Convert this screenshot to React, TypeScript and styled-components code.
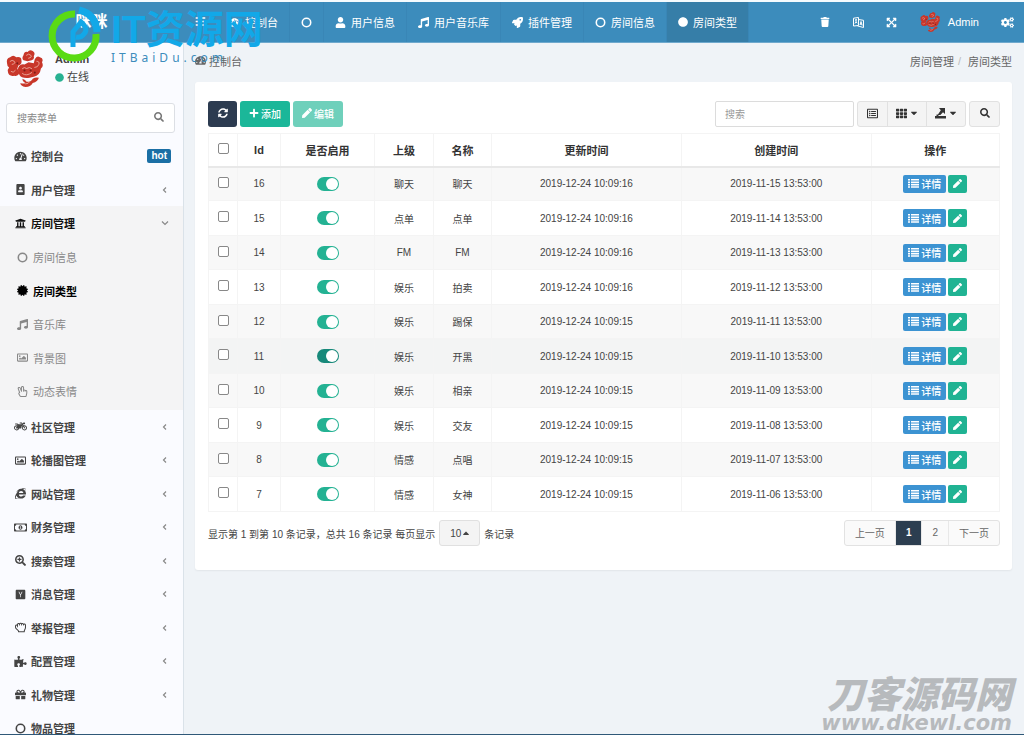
import React from "react";
import styled, { createGlobalStyle, css } from "styled-components";
import {
  FaBars, FaTachometerAlt, FaPortrait, FaUniversity, FaCircle, FaCertificate, FaMusic,
  FaRegImage, FaRegHandPeace, FaMotorcycle, FaInternetExplorer, FaRegMoneyBillAlt, FaSearchPlus,
  FaHackerNewsSquare, FaRegHandRock, FaPuzzlePiece, FaGift, FaUser, FaRocket, FaTrash,
  FaExpandArrowsAlt, FaCogs, FaSearch, FaPlus, FaPen, FaTh, FaCaretDown, FaCaretUp,
  FaSyncAlt, FaRegListAlt,
} from "react-icons/fa";

const Global = createGlobalStyle`
  * { box-sizing: border-box; }
  body { margin: 0; overflow: hidden; }
  body, button, input, select { font-family: "Liberation Sans", "Noto Sans CJK SC", sans-serif; }
  a { color: inherit; text-decoration: none; }
  button { cursor: pointer; }
  ul, ol { list-style: none; margin: 0; padding: 0; }
`;

const Page = styled.div`
  position: relative;
  display: flex;
  flex-direction: column;
  height: 100vh;
  overflow: hidden;
  background: #eff3f7;
  color: #444;
  font-size: 10px;
  border-top: 2px solid #f4fbfe;
  border-bottom: 1px solid #2f5878;
`;

const Header = styled.header`
  flex: none;
  display: flex;
  height: 41px;
  background: #3c8cbc;
  color: #fff;
  font-size: 11px;
  border-bottom: 1px solid #6fa9cd;
`;

const Brand = styled.a`
  width: 183px;
  flex: none;
  text-align: center;
  font-size: 16px;
  font-weight: 700;
  line-height: 40px;
`;

const Toggle = styled.button`
  width: 35px;
  border: 0;
  padding: 0;
  background: none;
  color: #fff;
  font-size: 11px;
`;

const TopTabs = styled.ul`
  display: flex;
  flex: 1;
`;

const TopTab = styled.li<{ $active?: boolean }>`
  display: flex;
  background: ${(p) => (p.$active ? "#367ea8" : "transparent")};
  border-right: 1px solid #3986b6;

  a {
    display: flex;
    align-items: center;
    gap: 5px;
    padding: 0 11px;
    white-space: nowrap;
  }
`;

const Tools = styled.div`
  display: flex;
  align-items: center;
`;

const Tool = styled.button<{ $wide?: boolean }>`
  display: flex;
  align-items: center;
  justify-content: center;
  gap: 8px;
  min-width: 33px;
  height: 40px;
  padding: 0 ${(p) => (p.$wide ? 12 : 8)}px;
  border: 0;
  background: none;
  color: #fff;
  font-size: 11px;
`;

const Body = styled.div`
  flex: 1;
  min-height: 0;
  display: flex;
`;

const Sidebar = styled.aside`
  width: 184px;
  flex: none;
  overflow: hidden;
  background: #fafbff;
  border-right: 1px solid #dae2e9;
`;

const UserPanel = styled.div`
  display: flex;
  gap: 12px;
  height: 60px;
  padding: 7px 6px;
`;

const UserInfo = styled.div`
  display: flex;
  flex-direction: column;
  gap: 2px;
  padding-top: 1px;
  font-size: 11px;
  line-height: 16px;

  span {
    display: flex;
    align-items: center;
    gap: 3px;
  }
  svg { color: #27b192; font-size: 9px; }
`;

const MenuSearch = styled.form`
  display: flex;
  align-items: center;
  height: 30px;
  margin: 0 8px 6px 6px;
  padding: 0 10px;
  background: #fff;
  border: 1px solid #dcdfe4;
  border-radius: 3px;
  color: #888;

  input {
    flex: 1;
    min-width: 0;
    padding: 0;
    border: 0;
    outline: 0;
    background: none;
    font-size: 10px;
  }
  input::placeholder { color: #888; }
  button { border: 0; padding: 0; background: none; color: #777; font-size: 10px; line-height: 1; }
`;

const rowHeights = css`
  > li > a { height: 34px; }
  > li:nth-child(even) > a { height: 33px; }
`;

const Menu = styled.ul`
  ${rowHeights}
  > li:nth-child(3) { background: #f4f4f5; color: #111; }
`;

const SubMenu = styled.ul`
  padding-bottom: 2px;
  color: #888;
  ${rowHeights}
`;

const MenuLink = styled.a<{ $sub?: boolean; $active?: boolean }>`
  display: flex;
  align-items: center;
  padding: 0 12px 0 ${(p) => (p.$sub ? 16 : 14)}px;
  font-size: 11px;
  font-weight: ${(p) => (p.$sub && !p.$active ? 400 : 700)};
  color: ${(p) => (p.$active ? "#000" : "inherit")};

  > svg:first-child { width: 13px; margin-right: 4px; font-size: 11px; }
  > span { flex: 1; }
  > svg:last-child { width: 12px; color: #888; }
`;

const Hot = styled.b`
  padding: 0 4px;
  border-radius: 2px;
  background: #1b6fa5;
  color: #fff;
  font-size: 10px;
  line-height: 14px;
`;

const Main = styled.main`
  flex: 1;
  min-width: 0;
  padding: 0 12px 0 11px;
`;

const Crumbs = styled.div`
  display: flex;
  justify-content: space-between;
  align-items: center;
  height: 39px;
  padding-bottom: 4px;
  font-size: 11px;
  color: #666;

  a, li { display: flex; align-items: center; gap: 3px; }
  ol { display: flex; }
  li + li::before { content: "/"; padding: 0 4px; color: #bbb; }
`;

const Panel = styled.section`
  padding: 19px 12px 24px 13px;
  background: #fff;
  border-radius: 3px;
  box-shadow: 0 1px 2px rgba(0, 0, 0, 0.06);
`;

const Toolbar = styled.div`
  display: flex;
  gap: 3px;
  height: 26px;
  margin-bottom: 6px;
`;

const Button = styled.button<{ $bg: string }>`
  display: flex;
  align-items: center;
  justify-content: center;
  gap: 2px;
  min-width: 29px;
  padding: 0 9px 2px;
  border: 0;
  border-radius: 3px;
  background: ${(p) => p.$bg};
  color: #fff;
  font-size: 10px;
  font-weight: 500;
`;

const Search = styled.input`
  width: 139px;
  margin-left: auto;
  padding: 0 9px;
  border: 1px solid #dcdcdc;
  border-radius: 2px;
  font-size: 10px;
  &::placeholder { color: #999; }
`;

const Group = styled.div`
  display: flex;
  border: 1px solid #e1e1e1;
  border-radius: 3px;
  background: #f4f4f4;
  overflow: hidden;
`;

const GroupButton = styled.button<{ $wide?: boolean }>`
  display: flex;
  align-items: center;
  justify-content: center;
  gap: 2px;
  width: ${(p) => (p.$wide ? 39 : 29)}px;
  padding: 0 0 2px;
  border: 0;
  background: none;
  color: #333;
  font-size: 11px;
  & + & { border-left: 1px solid #e1e1e1; }
`;

const Table = styled.table`
  width: 100%;
  table-layout: fixed;
  border-collapse: collapse;
  text-align: center;

  th, td { padding: 0; border: 1px solid #f4f4f4; }
  th { height: 33px; border-bottom: 2px solid #e8e8e8; font-size: 11px; color: #333; }
`;

const Row = styled.tr<{ $hover?: boolean }>`
  height: 34px;
  background: #fff;
  &:nth-child(odd) { background: #f8f8f8; }
  &:nth-child(even) { height: 35px; }
  ${(p) => p.$hover && css`&&& { background: #f3f4f4; }`}
`;

const Col = styled.col<{ $w: string }>`
  width: ${(p) => p.$w};
`;

const Check = styled.input`
  appearance: none;
  display: block;
  width: 11px;
  height: 11px;
  margin: 0 auto 3px;
  border: 1px solid #888;
  border-radius: 2px;
  background: #fff;
`;

const Switch = styled.input<{ $dark?: boolean }>`
  appearance: none;
  display: flex;
  justify-content: flex-end;
  width: 22px;
  height: 14px;
  margin: 0 auto;
  padding: 1px;
  border-radius: 7px;
  background: ${(p) => (p.$dark ? "#17897a" : "#24b293")};
  &::after { content: ""; width: 12px; height: 12px; border-radius: 6px; background: #fff; }
`;

const Actions = styled.div`
  display: flex;
  justify-content: center;
  gap: 2px;
`;

const SmallButton = styled.button<{ $bg: string }>`
  display: flex;
  align-items: center;
  gap: 2px;
  height: 18px;
  padding: 0 5px;
  border: 0;
  border-radius: 2px;
  background: ${(p) => p.$bg};
  color: #fff;
  font-size: 10px;
  font-weight: 500;
  > svg { font-size: 9px; }
`;

const Footer = styled.div`
  display: flex;
  align-items: flex-start;
  justify-content: space-between;
  padding-top: 8px;
`;

const Summary = styled.label`
  display: flex;
  align-items: center;
  gap: 4px;
  font-size: 10px;
`;

const PageSize = styled.span`
  position: relative;
  display: flex;
  align-items: center;

  select {
    appearance: none;
    width: 41px;
    height: 26px;
    padding: 0 10px;
    border: 1px solid #e0e0e0;
    border-radius: 3px;
    background: #f4f4f4;
    color: #444;
    font-size: 10px;
  }
  svg { position: absolute; right: 9px; pointer-events: none; }
`;

const Pager = styled.nav`
  display: flex;
  height: 26px;
  border: 1px solid #e2e2e2;
  border-radius: 3px;
  background: #fafafa;
  overflow: hidden;
`;

const PageLink = styled.a<{ $active?: boolean }>`
  display: flex;
  align-items: center;
  padding: 0 10px 2px;
  font-size: 10px;
  color: ${(p) => (p.$active ? "#fff" : "#666")};
  font-weight: ${(p) => (p.$active ? 700 : 400)};
  background: ${(p) => (p.$active ? "#2c3e50" : "transparent")};
  & + & { border-left: 1px solid #e8e8e8; }
`;

const SiteMark = styled.div`
  position: absolute;
  top: 4px;
  left: 47px;
  display: flex;
  gap: 10px;
  pointer-events: none;
  color: #12a8e8;
  white-space: nowrap;

  div { padding-top: 4px; }
  strong { display: block; font-size: 39px; line-height: 40px; font-weight: 700; }
  small {
    display: block;
    font: 12px/16px "Noto Sans", sans-serif;
    letter-spacing: 4px;
    color: #3c8cbc;
  }
`;

const SourceMark = styled.div`
  position: absolute;
  right: 12px;
  bottom: 1px;
  pointer-events: none;
  color: #b7babd;
  text-align: right;

  strong { display: block; font: italic 900 37px/42px "Noto Sans CJK SC", sans-serif; }
  span { display: block; font: italic 700 21px/20px "DejaVu Sans", sans-serif; }
`;

const Avatar = ({ size }: { size: number }) => (
  <svg width={size} height={size} viewBox="0 0 36 36" aria-hidden="true">
    <g fill="#c8372a">
      <path d="M17 5q1-4 4-3 2-3 5-1 3 2 1 5 1 3-2 4l-4 1-4-1q-2-2 0-5z" />
      <path d="M1 13q-1-5 3-6 3-3 6 0 5-1 5 3 1 4-3 5l-1 3 2 4q-1 4-5 3-5 1-6-3-1-3 1-5-2-1-2-4z" />
      <path d="M12 17q2-4 6-3l4-2 5 1 1-4q2-4 5-2 4 1 2 5 2 4-1 6-1 7-7 8l-4 1q-8 1-10-3-2-4-1-7z" />
      <path d="M16 28q3 1 4 3 5 0 6-3 3-2 6-1-1 4-6 5-2 4-7 4-5-1-5-4 3 1 5 0-3-1-3-4z" />
    </g>
    <g fill="none" stroke="#eeb5a8" strokeWidth="0.8" strokeLinecap="round">
      <path d="M20 5q2-2 4 0t-2 3M4 11q2-2 4 0t-2 3M5 21q2 2 4-1M16 18q2-2 4 0 3-2 5 0M16 23q4 3 9-1M30 11q3 0 2 3t-4 3M19 33q3 0 4-2" />
    </g>
    <g fill="#7a1c18">
      <circle cx="11" cy="13" r="1" /><circle cx="18" cy="20" r="1" /><circle cx="24" cy="20" r="1" /><circle cx="28" cy="22" r="1" />
    </g>
  </svg>
);

const Ring = () => (
  <svg width="1em" height="1em" viewBox="0 0 12 12" fill="none" stroke="currentColor" strokeWidth="1.7" aria-hidden="true">
    <circle cx="6" cy="6" r="4.6" />
  </svg>
);

const ListIcon = () => (
  <svg width="11" height="9" viewBox="0 0 11 9" fill="currentColor" aria-hidden="true">
    <path d="M0 0h2v1.6H0zM3 0h8v1.6H3zM0 2.4h2V4H0zM3 2.4h8V4H3zM0 4.8h2v1.6H0zM3 4.8h8v1.6H3zM0 7.2h2v1.6H0zM3 7.2h8v1.6H3z" />
  </svg>
);

const ExportIcon = () => (
  <svg width="11" height="11" viewBox="0 0 11 11" fill="currentColor" aria-hidden="true">
    <path d="M4 0h6v6L8 4.2 5.4 7H2.6l3.2-4.8zM0 8h11v2.6H0zM1.5 6.5h2V8h-2z" />
  </svg>
);

const TranslateIcon = () => (
  <svg width="11" height="11" viewBox="0 0 11 11" fill="none" stroke="currentColor" aria-hidden="true">
    <path d="M.5 1.2l5-.7v8l-5 .5zM5.5 2.5l5 .8v7.2l-6-1.6" />
    <path d="M2 3l2-.3M3 2.5v2.4L2 6.5M3 5l1.3 1M7 8l1-3.5L9.2 8.5M7.3 7l1.5.3" />
  </svg>
);

const Chevron = ({ down }: { down?: boolean }) => (
  <svg width="12" height="8" viewBox="0 0 12 8" fill="none" stroke="currentColor" strokeWidth="1.2" aria-hidden="true">
    <path d={down ? "M3 2.5l3 3 3-3" : "M7 1.5L4.5 4 7 6.5"} />
  </svg>
);

const topTabs = [
  { icon: <FaTachometerAlt />, label: "控制台" },
  { icon: <Ring />, label: "" },
  { icon: <FaUser />, label: "用户信息" },
  { icon: <FaMusic />, label: "用户音乐库" },
  { icon: <FaRocket />, label: "插件管理" },
  { icon: <Ring />, label: "房间信息" },
  { icon: <FaCircle size={10} />, label: "房间类型", active: true },
];

const subItems = [
  { icon: <Ring />, label: "房间信息" },
  { icon: <FaCertificate />, label: "房间类型", active: true },
  { icon: <FaMusic />, label: "音乐库" },
  { icon: <FaRegImage />, label: "背景图" },
  { icon: <FaRegHandPeace />, label: "动态表情" },
];

const menuItems = [
  { icon: <FaTachometerAlt />, label: "控制台", hot: true },
  { icon: <FaPortrait />, label: "用户管理" },
  { icon: <FaUniversity />, label: "房间管理", open: true },
  { icon: <FaMotorcycle />, label: "社区管理" },
  { icon: <FaRegImage />, label: "轮播图管理" },
  { icon: <FaInternetExplorer />, label: "网站管理" },
  { icon: <FaRegMoneyBillAlt />, label: "财务管理" },
  { icon: <FaSearchPlus />, label: "搜索管理" },
  { icon: <FaHackerNewsSquare />, label: "消息管理" },
  { icon: <FaRegHandRock />, label: "举报管理" },
  { icon: <FaPuzzlePiece />, label: "配置管理" },
  { icon: <FaGift />, label: "礼物管理" },
  { icon: <Ring />, label: "物品管理", leaf: true },
];

const rows = [
  [16, "聊天", "聊天", "2019-12-24 10:09:16", "2019-11-15 13:53:00"],
  [15, "点单", "点单", "2019-12-24 10:09:16", "2019-11-14 13:53:00"],
  [14, "FM", "FM", "2019-12-24 10:09:16", "2019-11-13 13:53:00"],
  [13, "娱乐", "拍卖", "2019-12-24 10:09:16", "2019-11-12 13:53:00"],
  [12, "娱乐", "踢保", "2019-12-24 10:09:15", "2019-11-11 13:53:00"],
  [11, "娱乐", "开黑", "2019-12-24 10:09:15", "2019-11-10 13:53:00"],
  [10, "娱乐", "相亲", "2019-12-24 10:09:15", "2019-11-09 13:53:00"],
  [9, "娱乐", "交友", "2019-12-24 10:09:15", "2019-11-08 13:53:00"],
  [8, "情感", "点唱", "2019-12-24 10:09:15", "2019-11-07 13:53:00"],
  [7, "情感", "女神", "2019-12-24 10:09:15", "2019-11-06 13:53:00"],
];

const columns = ["Id", "是否启用", "上级", "名称", "更新时间", "创建时间", "操作"];
const widths = ["29px", "43px", "94px", "59px", "58px", "24%", "24%", "auto"];

export default function App() {
  return (
    <Page>
      <Global />
      <Header>
        <Brand href="#">咪咪</Brand>
        <Toggle aria-label="切换菜单"><FaBars /></Toggle>
        <TopTabs>
          {topTabs.map((t, i) => (
            <TopTab key={i} $active={t.active}>
              <a href="#" aria-label={t.label || "页面"}>{t.icon}{t.label}</a>
            </TopTab>
          ))}
        </TopTabs>
        <Tools>
          <Tool aria-label="清除缓存"><FaTrash size={10} /></Tool>
          <Tool aria-label="语言"><TranslateIcon /></Tool>
          <Tool aria-label="全屏"><FaExpandArrowsAlt /></Tool>
          <Tool $wide><Avatar size={20} />Admin</Tool>
          <Tool aria-label="设置"><FaCogs size={13} /></Tool>
        </Tools>
      </Header>
      <Body>
        <Sidebar>
          <UserPanel>
            <Avatar size={37} />
            <UserInfo>
              <b>Admin</b>
              <span><FaCircle />在线</span>
            </UserInfo>
          </UserPanel>
          <MenuSearch>
            <input aria-label="搜索菜单" placeholder="搜索菜单" />
            <button type="button" aria-label="搜索"><FaSearch /></button>
          </MenuSearch>
          <Menu>
            {menuItems.map((m) => (
              <li key={m.label}>
                <MenuLink href="#">
                  {m.icon}
                  <span>{m.label}</span>
                  {m.hot && <Hot>hot</Hot>}
                  {!m.hot && !m.leaf && <Chevron down={m.open} />}
                </MenuLink>
                {m.open && (
                  <SubMenu>
                    {subItems.map((s) => (
                      <li key={s.label}>
                        <MenuLink href="#" $sub $active={s.active}>
                          {s.icon}
                          <span>{s.label}</span>
                        </MenuLink>
                      </li>
                    ))}
                  </SubMenu>
                )}
              </li>
            ))}
          </Menu>
        </Sidebar>
        <Main>
          <Crumbs>
            <a href="#"><FaTachometerAlt />控制台</a>
            <ol>
              <li>房间管理</li>
              <li>房间类型</li>
            </ol>
          </Crumbs>
          <Panel>
            <Toolbar>
              <Button $bg="#2c3b50" aria-label="刷新"><FaSyncAlt /></Button>
              <Button $bg="#1bb799"><FaPlus />添加</Button>
              <Button $bg="#6fd0bb"><FaPen />编辑</Button>
              <Search aria-label="搜索" placeholder="搜索" />
              <Group>
                <GroupButton aria-label="切换视图"><FaRegListAlt /></GroupButton>
                <GroupButton $wide aria-label="列"><FaTh /><FaCaretDown size={10} /></GroupButton>
                <GroupButton $wide aria-label="导出"><ExportIcon /><FaCaretDown size={10} /></GroupButton>
              </Group>
              <Group>
                <GroupButton aria-label="通用搜索"><FaSearch size={10} /></GroupButton>
              </Group>
            </Toolbar>
            <Table>
              <colgroup>{widths.map((w, i) => <Col key={i} $w={w} />)}</colgroup>
              <thead>
                <tr>
                  <th><Check type="checkbox" aria-label="全选" /></th>
                  {columns.map((c) => <th key={c}>{c}</th>)}
                </tr>
              </thead>
              <tbody>
                {rows.map((r) => (
                  <Row key={r[0]} $hover={r[0] === 11}>
                    <td><Check type="checkbox" aria-label={`选择 ${r[0]}`} /></td>
                    <td>{r[0]}</td>
                    <td><Switch type="checkbox" defaultChecked $dark={r[0] === 11} aria-label={`启用 ${r[0]}`} /></td>
                    <td>{r[1]}</td>
                    <td>{r[2]}</td>
                    <td>{r[3]}</td>
                    <td>{r[4]}</td>
                    <td>
                      <Actions>
                        <SmallButton $bg="#3c93d2"><ListIcon />详情</SmallButton>
                        <SmallButton $bg="#20b393" aria-label="编辑"><FaPen /></SmallButton>
                      </Actions>
                    </td>
                  </Row>
                ))}
              </tbody>
            </Table>
            <Footer>
              <Summary>
                显示第 1 到第 10 条记录，总共 16 条记录 每页显示
                <PageSize>
                  <select defaultValue="10"><option>10</option><option>25</option></select>
                  <FaCaretUp />
                </PageSize>
                条记录
              </Summary>
              <Pager>
                <PageLink href="#">上一页</PageLink>
                <PageLink href="#" $active>1</PageLink>
                <PageLink href="#">2</PageLink>
                <PageLink href="#">下一页</PageLink>
              </Pager>
            </Footer>
          </Panel>
        </Main>
      </Body>
      <SiteMark>
        <svg width="54" height="58" viewBox="0 0 54 58" fill="none" aria-hidden="true">
          <path d="M28 8A22 22 0 1 0 49 28" stroke="#5adb14" strokeWidth="7" />
          <path d="M32 4Q49 8 50 26" stroke="#12a8e8" strokeWidth="7" />
          <path d="M26 41V26l8-10q8 7 3 12-3 4-8 3" stroke="#12a8e8" strokeWidth="5" />
        </svg>
        <div>
          <strong>IT资源网</strong>
          <small>ITBaiDu.com</small>
        </div>
      </SiteMark>
      <SourceMark>
        <strong>刀客源码网</strong>
        <span>www.dkewl.com</span>
      </SourceMark>
    </Page>
  );
}
